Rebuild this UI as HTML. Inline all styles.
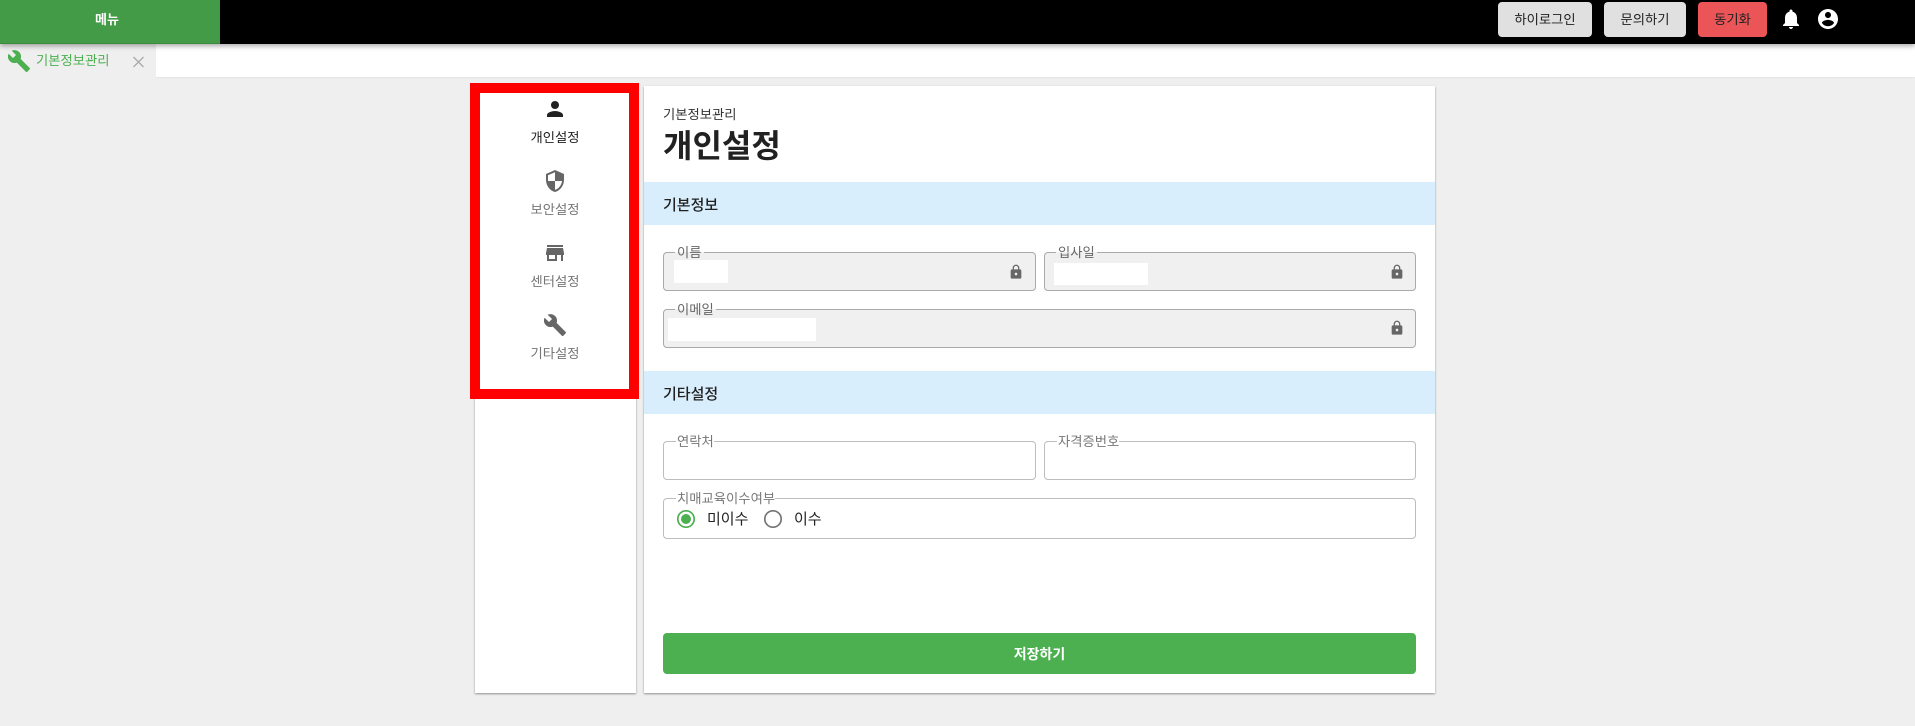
<!DOCTYPE html>
<html lang="ko"><head><meta charset="utf-8"><title>개인설정</title>
<style>
*{box-sizing:border-box}
html,body{margin:0;padding:0}
body{width:1915px;height:726px;position:relative;overflow:hidden;background:#efefef;font-family:"Liberation Sans","Noto Sans CJK KR",sans-serif;color:#212121}
.a{position:absolute}
.t{position:absolute;white-space:nowrap;line-height:20px;height:20px}
.btn{position:absolute;top:2px;height:35px;border-radius:4px;background:#e0e0e0;font-size:13.33px;line-height:35px;text-align:center;color:#212121}
svg{position:absolute;display:block}
fieldset{position:absolute;margin:0;padding:0;border:1px solid #aaa;border-radius:4px;left:0;min-width:0}
fieldset.ro{background:#f0f0f0}
fieldset.ed{border-color:#bdbdbd;background:#fff}
legend{margin-left:11px;padding:0 2px;font-size:13.33px;line-height:14px;height:14px;color:#666;white-space:nowrap;position:relative}
legend span{position:relative;top:1px}
fieldset.ed legend{color:#777;padding:0 0 0 1px;margin-left:12px}
.nav{position:absolute;left:480.500px;width:149px;text-align:center;font-size:13.33px;line-height:20px;color:#757575}
</style></head><body>

<!-- header -->
<div class="a" style="left:0;top:0;width:1915px;height:44px;background:#000;box-shadow:0 2px 5px rgba(0,0,0,.35);z-index:3"></div>
<div class="a" style="left:0;top:0;width:220px;height:44px;background:#439a47;z-index:4;border-bottom:1px solid #3b8a3f"></div>
<div class="t" style="left:95px;top:10px;font-size:13px;font-weight:700;color:#fff;z-index:5">메뉴</div>
<div style="position:absolute;z-index:5;left:0;top:0">
<div class="btn" style="left:1498px;width:94px">하이로그인</div>
<div class="btn" style="left:1604px;width:82px">문의하기</div>
<div class="btn" style="left:1698px;width:69px;background:#ec5558">동기화</div>
<svg style="left:1779px;top:7px" width="24" height="24" viewBox="0 0 24 24" fill="#fff"><path d="M12 22c1.100 0 2-.9 2-2h-4c0 1.100.89 2 2 2zm6-6v-5c0-3.070-1.640-5.640-4.500-6.320V4c0-.83-.67-1.500-1.500-1.500s-1.500.67-1.500 1.500v.68C7.630 5.360 6 7.920 6 11v5l-2 2v1h16v-1l-2-2z"/></svg>
<svg style="left:1816px;top:7px" width="24" height="24" viewBox="0 0 24 24" fill="#fff"><path d="M12 2C6.480 2 2 6.480 2 12s4.480 10 10 10 10-4.480 10-10S17.520 2 12 2zm0 3c1.660 0 3 1.340 3 3s-1.340 3-3 3-3-1.340-3-3 1.340-3 3-3zm0 14.200c-2.500 0-4.710-1.280-6-3.220.03-1.990 4-3.080 6-3.080 1.990 0 5.970 1.090 6 3.080-1.290 1.940-3.500 3.220-6 3.220z"/></svg>
</div>

<!-- tab strip -->
<div class="a" style="left:156px;top:44px;width:1759px;height:33px;background:#fff;box-shadow:0 1px 1px rgba(0,0,0,.05)"></div>
<svg style="left:7px;top:49px" width="24" height="24" viewBox="0 0 24 24" fill="#4caf50"><path d="M22.700 19l-9.100-9.100c.9-2.300.4-5-1.500-6.900-2-2-5-2.400-7.400-1.300L9 6 6 9 1.600 4.700C.4 7.100.9 10.100 2.900 12.100c1.900 1.900 4.600 2.400 6.900 1.500l9.100 9.100c.4.4 1 .4 1.400 0l2.300-2.300c.5-.4.5-1.100.1-1.400z"/></svg>
<div class="t" style="left:36px;top:51px;font-size:13.33px;color:#4caf50">기본정보관리</div>
<svg style="left:133px;top:56px" width="11" height="12" viewBox="0 0 11 12" fill="none" stroke="#aaa" stroke-width="1.300"><path d="M.5 1l10 10M10.500 1L.5 11"/></svg>

<!-- sidebar card -->
<div class="a" style="left:475px;top:86px;width:161px;height:607px;background:#fff;box-shadow:0 1px 2px rgba(0,0,0,.4)"></div>
<div class="a" style="left:470px;top:83px;width:169px;height:316px;border:10px solid #f00;background:#fff"></div>
<svg style="left:543px;top:97px" width="24" height="24" viewBox="0 0 24 24" fill="#212121"><path d="M12 12c2.210 0 4-1.790 4-4s-1.790-4-4-4-4 1.790-4 4 1.790 4 4 4zm0 2c-2.670 0-8 1.340-8 4v2h16v-2c0-2.660-5.330-4-8-4z"/></svg>
<div class="nav" style="top:128px;color:#212121">개인설정</div>
<svg style="left:543px;top:169px" width="24" height="24" viewBox="0 0 24 24" fill="#666"><path d="M12 1L3 5v6c0 5.550 3.840 10.740 9 12 5.160-1.260 9-6.450 9-12V5l-9-4zm0 10.990h7c-.53 4.120-3.280 7.790-7 8.940V12H5V6.300l7-3.110v8.800z"/></svg>
<div class="nav" style="top:200px">보안설정</div>
<svg style="left:543px;top:241px" width="24" height="24" viewBox="0 0 24 24" fill="#666"><path d="M20 4H4v2h16V4zm1 10v-2l-1-5H4l-1 5v2h1v6h10v-6h4v6h2v-6h1zm-9 4H6v-4h6v4z"/></svg>
<div class="nav" style="top:272px">센터설정</div>
<svg style="left:543px;top:313px" width="24" height="24" viewBox="0 0 24 24" fill="#666"><path d="M22.700 19l-9.100-9.100c.9-2.300.4-5-1.500-6.900-2-2-5-2.400-7.400-1.300L9 6 6 9 1.600 4.700C.4 7.100.9 10.100 2.900 12.100c1.900 1.900 4.600 2.400 6.900 1.500l9.100 9.100c.4.4 1 .4 1.400 0l2.300-2.300c.5-.4.5-1.100.1-1.400z"/></svg>
<div class="nav" style="top:344px">기타설정</div>

<!-- main card -->
<div class="a" style="left:644px;top:86px;width:791px;height:607px;background:#fff;box-shadow:0 1px 2px rgba(0,0,0,.4)"></div>
<div class="t" style="left:663px;top:105px;font-size:13.33px;color:#333">기본정보관리</div>
<div class="t" style="left:663px;top:126px;font-size:32px;font-weight:700;line-height:40px;height:40px;color:#212121">개인설정</div>

<div class="a" style="left:644px;top:182px;width:791px;height:43px;background:#d9eefc"></div>
<div class="t" style="left:663px;top:196px;font-size:15px;font-weight:500">기본정보</div>
<div class="a" style="left:644px;top:371px;width:791px;height:43px;background:#d9eefc"></div>
<div class="t" style="left:663px;top:385px;font-size:15px;font-weight:500">기타설정</div>

<!-- fields -->
<fieldset class="ro" style="left:663px;top:245px;width:373px;height:46px"><legend><span>이름</span></legend></fieldset>
<fieldset class="ro" style="left:1044px;top:245px;width:372px;height:46px"><legend><span>입사일</span></legend></fieldset>
<fieldset class="ro" style="left:663px;top:302px;width:753px;height:46px"><legend><span>이메일</span></legend></fieldset>
<div class="a" style="left:674px;top:260px;width:54px;height:23px;background:#fff"></div>
<div class="a" style="left:1054px;top:263px;width:94px;height:22px;background:#fff"></div>
<div class="a" style="left:668px;top:318px;width:148px;height:23px;background:#fff"></div>
<svg style="left:1008px;top:264px" width="16" height="16" viewBox="0 0 24 24" fill="#666"><path d="M18 8h-1V6c0-2.760-2.240-5-5-5S7 3.240 7 6v2H6c-1.100 0-2 .9-2 2v10c0 1.100.9 2 2 2h12c1.100 0 2-.9 2-2V10c0-1.100-.9-2-2-2zm-6 9c-1.100 0-2-.9-2-2s.9-2 2-2 2 .9 2 2-.9 2-2 2zm3.100-9H8.900V6c0-1.710 1.390-3.100 3.100-3.100 1.710 0 3.100 1.390 3.100 3.100v2z"/></svg>
<svg style="left:1389px;top:264px" width="16" height="16" viewBox="0 0 24 24" fill="#666"><path d="M18 8h-1V6c0-2.760-2.240-5-5-5S7 3.240 7 6v2H6c-1.100 0-2 .9-2 2v10c0 1.100.9 2 2 2h12c1.100 0 2-.9 2-2V10c0-1.100-.9-2-2-2zm-6 9c-1.100 0-2-.9-2-2s.9-2 2-2 2 .9 2 2-.9 2-2 2zm3.100-9H8.900V6c0-1.710 1.390-3.100 3.100-3.100 1.710 0 3.100 1.390 3.100 3.100v2z"/></svg>
<svg style="left:1389px;top:320px" width="16" height="16" viewBox="0 0 24 24" fill="#666"><path d="M18 8h-1V6c0-2.760-2.240-5-5-5S7 3.240 7 6v2H6c-1.100 0-2 .9-2 2v10c0 1.100.9 2 2 2h12c1.100 0 2-.9 2-2V10c0-1.100-.9-2-2-2zm-6 9c-1.100 0-2-.9-2-2s.9-2 2-2 2 .9 2 2-.9 2-2 2zm3.100-9H8.900V6c0-1.710 1.390-3.100 3.100-3.100 1.710 0 3.100 1.390 3.100 3.100v2z"/></svg>

<fieldset class="ed" style="left:663px;top:434px;width:373px;height:46px"><legend><span>연락처</span></legend></fieldset>
<fieldset class="ed" style="left:1044px;top:434px;width:372px;height:46px"><legend><span>자격증번호</span></legend></fieldset>
<fieldset class="ed" style="left:663px;top:491px;width:753px;height:48px"><legend><span>치매교육이수여부</span></legend></fieldset>

<svg style="left:676px;top:509px" width="20" height="20" viewBox="0 0 20 20"><circle cx="10" cy="10" r="8.200" fill="#fff" stroke="#4caf50" stroke-width="1.700"/><circle cx="10" cy="10" r="5" fill="#4caf50"/></svg>
<div class="t" style="left:707px;top:509px;font-size:15px;line-height:22px;height:22px;color:#212121">미이수</div>
<svg style="left:763px;top:509px" width="20" height="20" viewBox="0 0 20 20"><circle cx="10" cy="10" r="8.200" fill="#fff" stroke="#757575" stroke-width="1.700"/></svg>
<div class="t" style="left:794px;top:509px;font-size:15px;line-height:22px;height:22px;color:#212121">이수</div>

<div class="a" style="left:663px;top:633px;width:753px;height:41px;border-radius:4px;background:#4caf50;color:#fff;font-size:14px;font-weight:700;line-height:42px;text-align:center">저장하기</div>

</body></html>
